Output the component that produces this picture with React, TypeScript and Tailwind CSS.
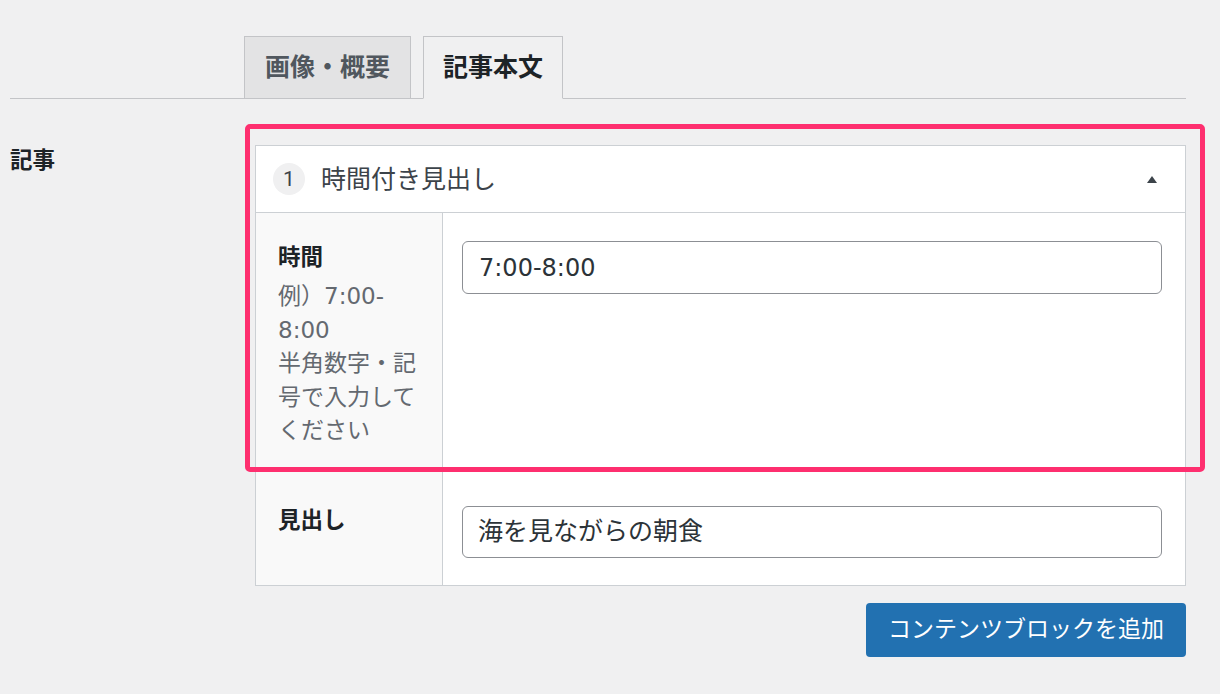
export default function App() {
  return (
    <div className="relative min-h-[694px] w-[1220px] overflow-hidden bg-[#f0f0f1] font-['DejaVu_Sans','Noto_Sans_CJK_JP',sans-serif] text-[#3c434a]">
      <div className="ml-[10px] w-[1176px] pt-[36px]">
        {/* Tabs */}
        <div className="flex items-end gap-[12px] border-b border-[#c3c4c7] pl-[234px]">
          <div className="-mb-px flex h-[63px] items-center border border-[#c3c4c7] bg-[#e3e3e4] px-[20px] text-[25px] font-bold leading-none text-[#50575e]">
            画像・概要
          </div>
          <div className="-mb-px flex h-[63px] items-center border border-[#c3c4c7] border-b-[#f0f0f1] bg-[#f0f0f1] px-[19px] text-[25px] font-bold leading-none text-[#1d2327]">
            記事本文
          </div>
        </div>

        {/* Main row */}
        <div className="mt-[46px] flex">
          <div className="w-[245px] text-[22.5px] font-bold leading-[30px] text-[#1d2327]">記事</div>
          <div className="w-[931px]">
            <div className="border border-[#ccd0d4] bg-white">
              {/* Header */}
              <div className="flex h-[67px] items-center border-b border-[#ccd0d4] pl-[17px] pr-[28px]">
                <div className="flex h-[32px] w-[32px] items-center justify-center rounded-full bg-[#f0f0f1] font-['Roboto','Liberation_Sans',sans-serif] text-[21px] leading-none text-[#3c434a]">
                  1
                </div>
                <div className="ml-[16px] text-[25px] leading-none text-[#3c434a]">時間付き見出し</div>
                <div className="ml-auto">
                  <svg width="10" height="7" viewBox="0 0 10 7">
                    <polygon points="5,0 10,7 0,7" fill="#3c434a" />
                  </svg>
                </div>
              </div>

              {/* Row 1 */}
              <div className="flex border-b border-[#ccd0d4]">
                <div className="w-[187px] shrink-0 border-r border-[#ccd0d4] bg-[#f9f9f9] px-[22px] pb-[23px] pt-[28px]">
                  <div className="text-[22.5px] font-bold leading-[32px] text-[#1d2327]">時間</div>
                  <div className="mt-[7px] text-[23px] leading-[33.5px] text-[#646970]">
                    <div>例）7:00-</div>
                    <div>8:00</div>
                    <div>半角数字・記</div>
                    <div>号で入力して</div>
                    <div>ください</div>
                  </div>
                </div>
                <div className="flex-1 pl-[19px] pr-[23px] pt-[28px]">
                  <div className="flex h-[53px] items-center rounded-[6px] border border-[#8c8f94] bg-white px-[16px] text-[24px] text-[#2c3338]">
                    7:00-8:00
                  </div>
                </div>
              </div>

              {/* Row 2 */}
              <div className="flex">
                <div className="w-[187px] shrink-0 border-r border-[#ccd0d4] bg-[#f9f9f9] px-[22px] pb-[27px] pt-[32px]">
                  <div className="text-[22.5px] font-bold leading-[32px] text-[#1d2327]">見出し</div>
                </div>
                <div className="flex-1 pb-[27px] pl-[19px] pr-[23px] pt-[34px]">
                  <div className="flex h-[52px] items-center rounded-[6px] border border-[#8c8f94] bg-white px-[15px] text-[25px] text-[#2c3338]">
                    海を見ながらの朝食
                  </div>
                </div>
              </div>
            </div>

            <div className="mt-[17px] flex justify-end">
              <button className="flex h-[54px] w-[320px] items-center justify-center rounded-[4px] bg-[#2271b1] text-[23px] text-white">
                コンテンツブロックを追加
              </button>
            </div>
          </div>
        </div>
      </div>

      {/* Annotation highlight */}
      <div className="pointer-events-none absolute left-[245px] top-[124px] h-[348px] w-[960px] rounded-[5px] border-[5px] border-[#fe2f6f]" />
    </div>
  );
}
